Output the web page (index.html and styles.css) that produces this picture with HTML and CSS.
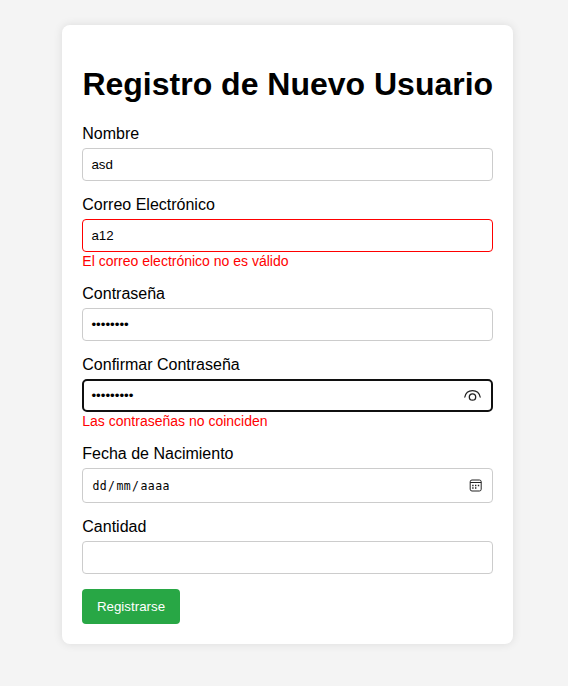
FILE: index.html
```html
<!DOCTYPE html>
<html lang="es">
<head>
<meta charset="utf-8">
<title>Registro de Nuevo Usuario</title>
<link rel="stylesheet" href="styles.css">
</head>
<body>
<form class="card">
  <h1>Registro de Nuevo Usuario</h1>
  <div class="group"><label>Nombre</label><div class="input">asd</div></div>
  <div class="group"><label>Correo Electrónico</label><div class="input invalid">a12</div><div class="error">El correo electrónico no es válido</div></div>
  <div class="group"><label>Contraseña</label><div class="input">••••••••</div></div>
  <div class="group"><label>Confirmar Contraseña</label><div class="input focus"><span>•••••••••</span>
    <svg class="eye" width="17" height="13" viewBox="0 0 17 13" fill="none" stroke="#222" stroke-width="1.15" stroke-linecap="round"><path d="M.8 8.2C2.4-.6 14.6-.6 16.2 8.2"/><circle cx="8.5" cy="8" r="3.2" stroke-width="1.3"/></svg>
  </div><div class="error">Las contraseñas no coinciden</div></div>
  <div class="group"><label>Fecha de Nacimiento</label><div class="input date"><span class="fields"><span class="field">dd</span>/<span class="field">mm</span>/<span class="field">aaaa</span></span>
    <svg class="calendar" width="13" height="13" viewBox="0 0 13 13" fill="none" stroke="#222"><rect x="1.2" y="1" width="11" height="11" rx="1.8"/><path d="M1.2 3.5h11"/><path d="M3.2 6.5h1.4M6 6.5h1.4M8.8 6.5h1.4M3.2 9h1.4M6 9h1.4" stroke-width="1.3"/></svg>
  </div></div>
  <div class="group"><label>Cantidad</label><div class="input"></div></div>
  <button type="button">Registrarse</button>
</form>
</body>
</html>
```
FILE: styles.css
```css
* { box-sizing: border-box; }
body { margin: 0; height: 686px; padding-top: 25px; background: #f4f4f4; font-family: "Liberation Sans", Arial, sans-serif; font-size: 16px; color: #000; }
.card { width: 451px; height: 619px; margin: 0 auto 0 62px; padding: 20px; background: #fff; border-radius: 8px; box-shadow: 0 0 10px rgba(0,0,0,.1); }
h1 { margin: 21px 0 22px; font-size: 32px; line-height: 37px; white-space: nowrap; text-indent: .4px; }
.group { margin-bottom: 15px; }
label { display: block; margin-bottom: 5px; line-height: 18px; text-indent: .3px; }
.input { display: flex; align-items: center; justify-content: space-between; height: 33px; padding: 0 8.4px; border: 1px solid #ccc; border-radius: 4px; font-size: 13.333px; }
.invalid { border-color: #f00; }
.focus { border: 2px solid #101010; border-radius: 5px; padding: 0 7.4px; }
.eye { margin-right: 2.6px; }
.date { height: 35px; font-family: "DejaVu Sans Mono", monospace; font-size: 11.5px; letter-spacing: .42px; }
.fields { display: flex; }
.field { padding: 0 1px; }
.calendar { margin-right: 1.6px; }
.error { color: #f00; font-size: 14px; line-height: 18px; text-indent: .3px; }
button { display: block; width: 98px; height: 35px; padding: 0; border: 0; border-radius: 4px; background: #28a745; color: #fff; font: 13.333px "Liberation Sans", Arial, sans-serif; }
```
